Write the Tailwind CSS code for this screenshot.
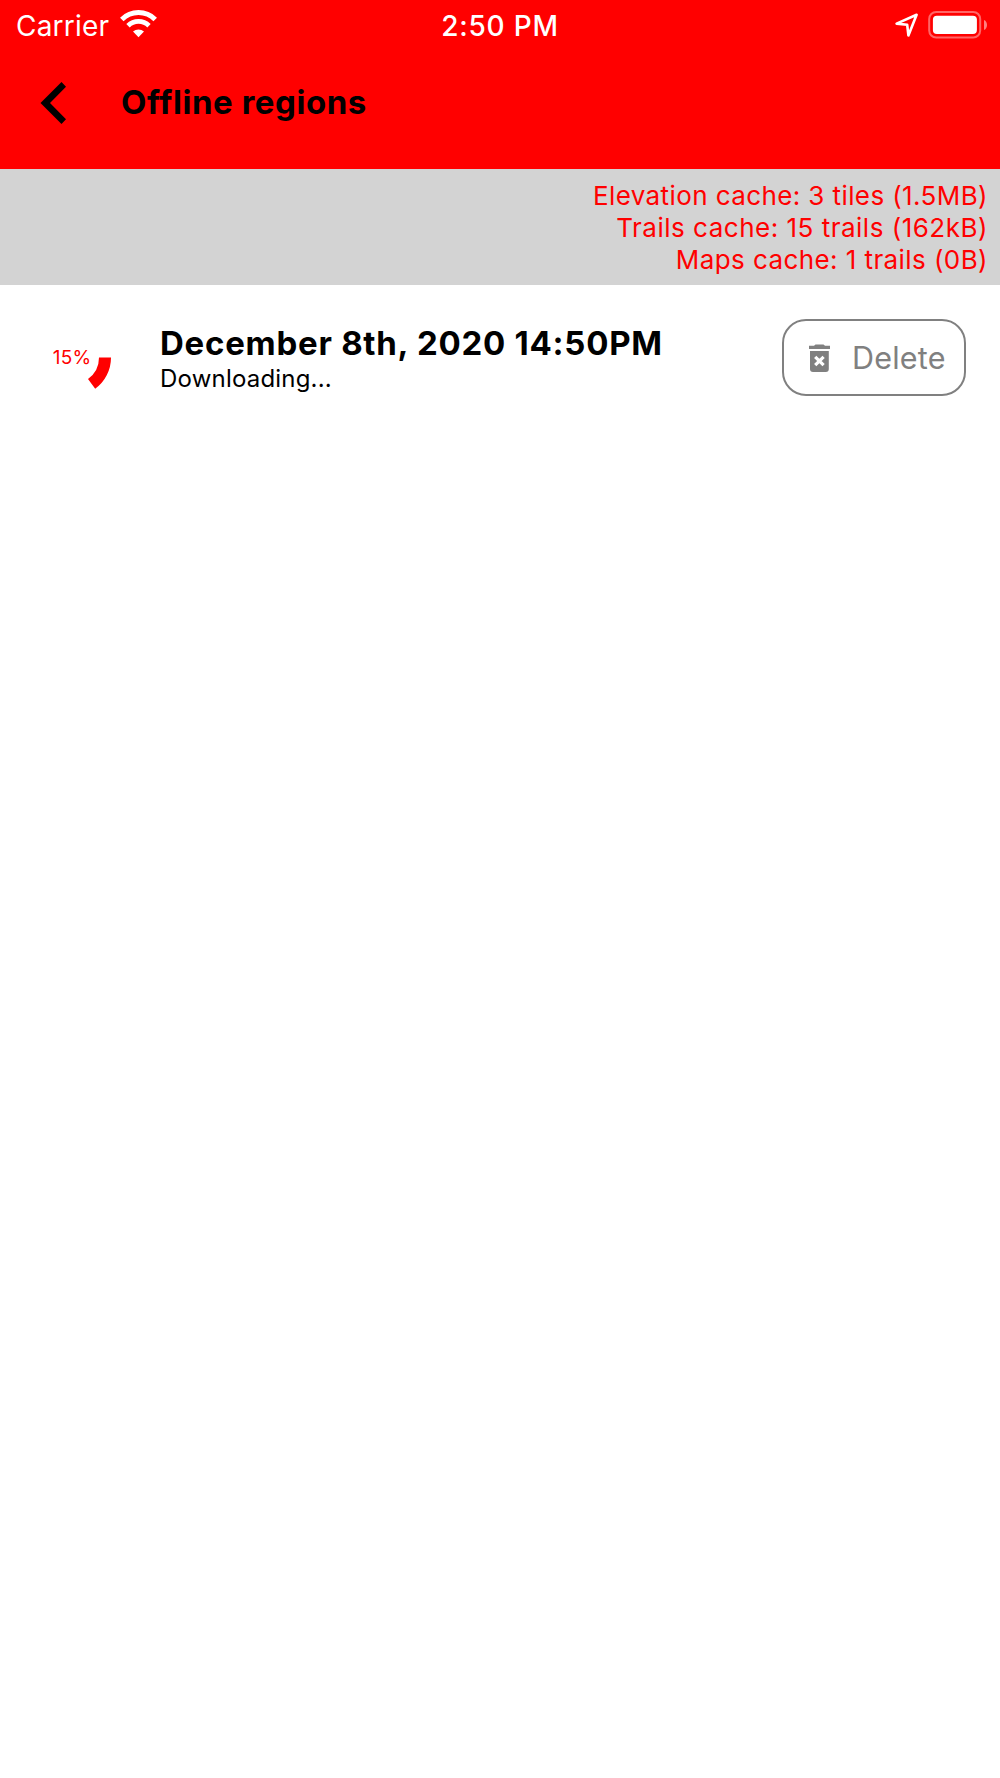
<!DOCTYPE html>
<html lang="en">
<head>
    <meta charset="UTF-8">
    <meta name="viewport" content="width=device-width, initial-scale=1.0">
    <title>Offline regions</title>
    <script src="https://cdn.jsdelivr.net/npm/@tailwindcss/browser@4"></script>
</head>
<body class="bg-white font-['Inter',sans-serif] min-h-screen">
    <header class="bg-[#ff0000] h-[169px]">
        <!-- Status bar -->
        <div class="grid grid-cols-3 items-center h-[51px] px-[14px] text-white text-[28px] leading-[49px]">
            <div class="flex items-center pl-[2px]">
                <span class="pt-[2px] tracking-[0.2px]">Carrier</span>
                <svg class="ml-[11px] -mt-[3px]" width="37" height="28" viewBox="0 0 37 28" fill="none" stroke="#fff">
                    <path d="M1.8 9.4A23.7 23.7 0 0 1 35.2 9.4" stroke-width="5"/>
                    <path d="M8 15.7A15 15 0 0 1 29 15.7" stroke-width="4.8"/>
                    <path d="M18.5 27.2L13 21.6A8 8 0 0 1 24 21.6Z" fill="#fff" stroke="none"/>
                </svg>
            </div>
            <div class="pt-[2px] text-center font-medium tracking-[0.8px]">2:50 PM</div>
            <div class="flex items-center justify-end -mr-[2px] -mt-[2px]">
                <svg width="24" height="24" viewBox="0 0 24 24" fill="none" stroke="#fff" stroke-width="2.6" stroke-linejoin="round">
                    <path d="M1.6 10.6L21.6 1.8L13.4 22.4L12.2 11.8Z"/>
                </svg>
                <svg class="ml-[9px]" width="60" height="28" viewBox="0 0 60 28">
                    <rect x="1.2" y="1" width="51" height="25.6" rx="7" fill="none" stroke="#fff" stroke-opacity=".4" stroke-width="2"/>
                    <rect x="4.9" y="4.7" width="44" height="18.2" rx="4" fill="#fff"/>
                    <path d="M56 9C60 10.5 60 17.5 56 19Z" fill="#fff" fill-opacity=".5"/>
                </svg>
            </div>
        </div>
        <!-- Navigation -->
        <div class="flex items-center h-[104px] pl-[40px]">
            <svg width="26" height="42" viewBox="0 0 26 42">
                <path d="M21.5 0L26 4.8L10 21L26 37.2L21.5 42L0.5 21Z" fill="#000"/>
            </svg>
            <h1 class="ml-[55px] text-[33px] font-bold tracking-[0.55px] text-black">Offline regions</h1>
        </div>
    </header>

    <div class="bg-[#d3d3d3] h-[116px] pt-[11px] pr-[12px] text-right text-[#ff0000] text-[26px] leading-[32.2px]">
        <p class="tracking-[0.4px]">Elevation cache: 3 tiles (1.5MB)</p>
        <p class="tracking-[0.5px]">Trails cache: 15 trails (162kB)</p>
        <p class="tracking-[0.42px]">Maps cache: 1 trails (0B)</p>
    </div>

    <main class="flex items-center h-[145px] pl-[33px] pr-[34px]">
        <!-- Progress ring, 15% of a turn -->
        <div class="relative w-[78px] h-[78px] flex items-center justify-center">
            <svg class="absolute inset-0" width="78" height="78" viewBox="0 0 78 78">
                <path d="M78 38.5A38.5 38.5 0 0 1 62.2 69.7L55 60A26.5 26.5 0 0 0 66 38.5Z" fill="#ff0000"/>
            </svg>
            <span class="relative pt-[2px] text-[19px] tracking-[0.2px] text-[#ff0000]">15%</span>
        </div>
        <div class="ml-[49px] flex-1 pt-[6px]">
            <h2 class="text-[33px] leading-[36px] font-bold tracking-[0.75px] text-black">December 8th, 2020 14:50PM</h2>
            <p class="text-[24px] leading-[36px] tracking-[0.2px] text-black">Downloading...</p>
        </div>
        <button class="flex items-center w-[184px] h-[77px] pl-[24px] border-2 border-[#808080] rounded-[24px] text-[#808080]">
            <svg width="23" height="28" viewBox="0 0 23 28">
                <path d="M1 1.8H6L7.5 0.4H15.5L17 1.8H22V5H1Z" fill="#808080"/>
                <path d="M2 7H20.8V25Q20.8 28 17.8 28H5Q2 28 2 25Z" fill="#808080"/>
                <path d="M7.2 12.8L15.6 21.2M15.6 12.8L7.2 21.2" stroke="#fff" stroke-width="3.2"/>
            </svg>
            <span class="ml-[21px] text-[30.5px] tracking-[0.2px]">Delete</span>
        </button>
    </main>
</body>
</html>
